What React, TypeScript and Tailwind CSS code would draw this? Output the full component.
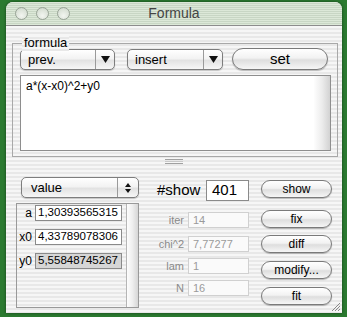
import React from "react";

const stripe =
  "bg-[repeating-linear-gradient(180deg,#f6f6f6_0px,#f6f6f6_2px,#e8e8e8_2px,#e8e8e8_4px)]";
const font = { fontFamily: '"Liberation Sans", Arial, sans-serif' };

function Popup({ label, w }: { label: string; w: string }) {
  return (
    <div
      className={`${w} h-[21px] flex rounded-[5px] border border-[#7d7d7d] bg-[linear-gradient(180deg,#ffffff_0%,#f3f3f3_45%,#e2e2e2_55%,#f7f7f7_100%)] shadow-[0_1px_1px_rgba(0,0,0,0.2)]`}
    >
      <div className="flex-1 flex items-center pl-[7px] text-[13px] text-black">{label}</div>
      <div className="w-[19px] border-l border-[#9a9a9a] flex items-center justify-center">
        <svg width="9" height="7" viewBox="0 0 9 7">
          <path d="M0 0H9L4.5 7Z" fill="#111" />
        </svg>
      </div>
    </div>
  );
}

function Pill({ label, cls, text = "text-[12px]" }: { label: string; cls: string; text?: string }) {
  return (
    <div
      className={`${cls} flex items-center justify-center rounded-full border border-[#7a7a7a] bg-[linear-gradient(180deg,#ffffff_0%,#f2f2f2_45%,#dedede_55%,#f6f6f6_100%)] shadow-[0_1px_1px_rgba(0,0,0,0.25)] ${text} text-black`}
    >
      {label}
    </div>
  );
}

function InfoRow({ label, value, mt }: { label: string; value: string; mt: string }) {
  return (
    <div className={`flex items-center ${mt}`}>
      <div className="w-[39px] text-right text-[11px] text-[#8a8a8a]">{label}</div>
      <div className="ml-[4px] w-[61px] h-[16px] border border-[#d0d0d0] bg-[#fafafa] flex items-center pl-[4px] text-[11px] text-[#9a9a9a]">
        {value}
      </div>
    </div>
  );
}

function ParamRow({ label, value, sel, mt }: { label: string; value: string; sel?: boolean; mt: string }) {
  return (
    <div className={`flex items-center ${mt}`}>
      <div className="w-[18px] text-right pr-[3px] text-[12px] text-black">{label}</div>
      <div
        className={`w-[87px] h-[16px] border border-[#8a8a8a] ${sel ? "bg-[#d6d6d6]" : "bg-white"} flex items-center pl-[2px] text-[11.5px] text-black`}
      >
        {value}
      </div>
    </div>
  );
}

export default function App() {
  return (
    <div className="w-[347px] h-[317px] bg-[#2b7a30] pt-[2px] pl-[6px]" style={font}>
      <div className="relative w-[336px] h-[311px] rounded-t-[7px] overflow-hidden flex flex-col bg-[#f0f0f0] shadow-[0_0_3px_rgba(0,0,0,0.5)]">
        {/* title bar */}
        <div className="h-[24px] shrink-0 flex items-center relative border-b border-[#8c8c8c] bg-[repeating-linear-gradient(180deg,#dce8d8_0px,#dce8d8_1px,#c8d6c4_1px,#c8d6c4_2px)]">
          <div className="flex items-center gap-[8px] pl-[9px]">
            {[0, 1, 2].map((i) => (
              <div
                key={i}
                className="w-[13px] h-[13px] rounded-full border border-[#98a396] bg-[radial-gradient(circle_at_50%_70%,#f2f5f0_0%,#d8e0d5_70%,#c0cabd_100%)]"
              />
            ))}
          </div>
          <div className="absolute inset-0 flex items-center justify-center text-[14px] text-[#444]">Formula</div>
        </div>

        {/* content */}
        <div className={`flex-1 ${stripe} flex flex-col`}>
          {/* formula group */}
          <div className="relative mt-[17px] ml-[6px] w-[326px] h-[114px] border border-[#a8a8a8] pl-[7px] pt-[5px]">
            <div className={`absolute -top-[9px] left-[9px] px-[2px] text-[13px] leading-[16px] text-black ${stripe}`}>
              formula
            </div>
            <div className="flex items-start">
              <Popup label="prev." w="w-[95px]" />
              <div className="ml-[12px]">
                <Popup label="insert" w="w-[96px]" />
              </div>
              <Pill label="set" cls="ml-[9px] -mt-[1px] w-[96px] h-[22px]" text="text-[15px]" />
            </div>
            <div className="mt-[5px] w-[311px] h-[76px] border border-[#8e8e8e] bg-white flex">
              <div className="flex-1 pl-[5px] pt-[3px] text-[12px] text-black leading-[14px]">a*(x-x0)^2+y0</div>
              <div className="w-[16px] bg-[linear-gradient(90deg,#fdfdfd_0%,#ececec_50%,#d2d2d2_100%)]" />
            </div>
          </div>

          {/* splitter */}
          <div className="flex justify-center mt-[2px]">
            <div className="w-[18px] flex flex-col gap-[1px]">
              <div className="h-[1px] bg-[#a0a0a0]" />
              <div className="h-[1px] bg-[#c8c8c8]" />
              <div className="h-[1px] bg-[#a0a0a0]" />
            </div>
          </div>

          {/* bottom section */}
          <div className="flex mt-[13px]">
            {/* left column */}
            <div className="ml-[10px] w-[123px] flex flex-col">
              <div className="ml-[5px] w-[118px] h-[21px] flex rounded-[5px] border border-[#7d7d7d] bg-[linear-gradient(180deg,#ffffff_0%,#f3f3f3_45%,#e2e2e2_55%,#f7f7f7_100%)] shadow-[0_1px_1px_rgba(0,0,0,0.2)]">
                <div className="flex-1 flex items-center pl-[9px] text-[13px] text-black">value</div>
                <div className="w-[21px] border-l border-[#9a9a9a] flex flex-col items-center justify-center gap-[2px]">
                  <svg width="6" height="4" viewBox="0 0 6 4">
                    <path d="M0 4H6L3 0Z" fill="#111" />
                  </svg>
                  <svg width="6" height="4" viewBox="0 0 6 4">
                    <path d="M0 0H6L3 4Z" fill="#111" />
                  </svg>
                </div>
              </div>
              <div className="mt-[5px] w-[123px] h-[105px] border border-[#999] flex">
                <div className="flex-1 flex flex-col">
                  <ParamRow label="a" value="1,30393565315" mt="mt-[0px]" />
                  <ParamRow label="x0" value="4,33789078306" mt="mt-[6px]" />
                  <ParamRow label="y0" value="5,55848745267" sel mt="mt-[6px]" />
                </div>
                <div className="w-[12px] border-l border-[#b5b5b5] bg-[linear-gradient(90deg,#fdfdfd_0%,#eeeeee_50%,#d6d6d6_100%)]" />
              </div>
            </div>

            {/* middle column */}
            <div className="ml-[6px] w-[104px] flex flex-col pt-[3px]">
              <div className="flex items-center h-[21px]">
                <div className="ml-[12px] text-[15px] text-black">#show</div>
                <div className="ml-auto w-[43px] h-[21px] border border-[#8a8a8a] bg-white flex items-center pl-[5px] text-[15px] text-black">
                  401
                </div>
              </div>
              <InfoRow label="iter" value="14" mt="mt-[11px]" />
              <InfoRow label="chi^2" value="7,77277" mt="mt-[7px]" />
              <InfoRow label="lam" value="1" mt="mt-[6px]" />
              <InfoRow label="N" value="16" mt="mt-[5px]" />
            </div>

            {/* right column */}
            <div className="ml-[12px] w-[71px] flex flex-col pt-[3px]">
              <Pill label="show" cls="h-[18px]" />
              <Pill label="fix" cls="mt-[12px] h-[18px]" />
              <Pill label="diff" cls="mt-[7px] h-[18px]" />
              <Pill label="modify..." cls="mt-[8px] h-[18px]" />
              <Pill label="fit" cls="mt-[8px] h-[18px]" />
            </div>
          </div>
        </div>

        {/* resize grip */}
        <svg className="absolute right-[1px] bottom-[1px]" width="11" height="11" viewBox="0 0 11 11">
          <path d="M10 2L2 10M10 5L5 10M10 8L8 10" stroke="#8a8a8a" strokeWidth="1" />
        </svg>
      </div>
    </div>
  );
}
